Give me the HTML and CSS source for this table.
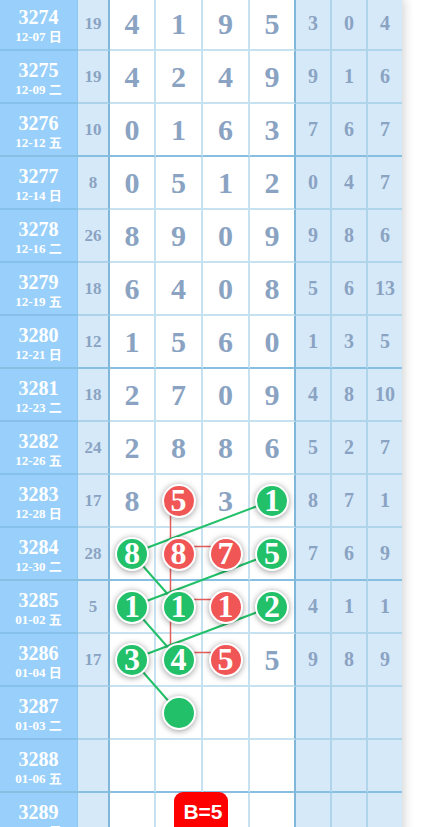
FILE: index.html
```html
<!DOCTYPE html>
<html lang="zh">
<head>
  <meta charset="UTF-8" />
  <meta name="viewport" content="width=device-width, initial-scale=1.0"/>
  <title>走势图</title>
  <link rel="stylesheet" href="styles.css">
</head>
<body>

  <div class="chart">

    <div class="row">
      <div class="no"><b>3274</b><span>12-07 日</span></div>
      <div class="sum">19</div>
      <div class="d">4</div><div class="d">1</div><div class="d">9</div><div class="d last">5</div>
      <div class="s">3</div><div class="s">0</div><div class="s">4</div>
    </div>
    <div class="row">
      <div class="no"><b>3275</b><span>12-09 二</span></div>
      <div class="sum">19</div>
      <div class="d">4</div><div class="d">2</div><div class="d">4</div><div class="d last">9</div>
      <div class="s">9</div><div class="s">1</div><div class="s">6</div>
    </div>
    <div class="row end">
      <div class="no"><b>3276</b><span>12-12 五</span></div>
      <div class="sum">10</div>
      <div class="d">0</div><div class="d">1</div><div class="d">6</div><div class="d last">3</div>
      <div class="s">7</div><div class="s">6</div><div class="s">7</div>
    </div>

    <div class="row">
      <div class="no"><b>3277</b><span>12-14 日</span></div>
      <div class="sum">8</div>
      <div class="d">0</div><div class="d">5</div><div class="d">1</div><div class="d last">2</div>
      <div class="s">0</div><div class="s">4</div><div class="s">7</div>
    </div>
    <div class="row">
      <div class="no"><b>3278</b><span>12-16 二</span></div>
      <div class="sum">26</div>
      <div class="d">8</div><div class="d">9</div><div class="d">0</div><div class="d last">9</div>
      <div class="s">9</div><div class="s">8</div><div class="s">6</div>
    </div>
    <div class="row">
      <div class="no"><b>3279</b><span>12-19 五</span></div>
      <div class="sum">18</div>
      <div class="d">6</div><div class="d">4</div><div class="d">0</div><div class="d last">8</div>
      <div class="s">5</div><div class="s">6</div><div class="s">13</div>
    </div>
    <div class="row end">
      <div class="no"><b>3280</b><span>12-21 日</span></div>
      <div class="sum">12</div>
      <div class="d">1</div><div class="d">5</div><div class="d">6</div><div class="d last">0</div>
      <div class="s">1</div><div class="s">3</div><div class="s">5</div>
    </div>

    <div class="row">
      <div class="no"><b>3281</b><span>12-23 二</span></div>
      <div class="sum">18</div>
      <div class="d">2</div><div class="d">7</div><div class="d">0</div><div class="d last">9</div>
      <div class="s">4</div><div class="s">8</div><div class="s">10</div>
    </div>
    <div class="row">
      <div class="no"><b>3282</b><span>12-26 五</span></div>
      <div class="sum">24</div>
      <div class="d">2</div><div class="d">8</div><div class="d">8</div><div class="d last">6</div>
      <div class="s">5</div><div class="s">2</div><div class="s">7</div>
    </div>
    <div class="row">
      <div class="no"><b>3283</b><span>12-28 日</span></div>
      <div class="sum">17</div>
      <div class="d">8</div>
      <div class="d"><i class="ball red">5</i></div>
      <div class="d">3</div>
      <div class="d last"><i class="ball green">1</i></div>
      <div class="s">8</div><div class="s">7</div><div class="s">1</div>
    </div>
    <div class="row end">
      <div class="no"><b>3284</b><span>12-30 二</span></div>
      <div class="sum">28</div>
      <div class="d"><i class="ball green">8</i></div>
      <div class="d"><i class="ball red">8</i></div>
      <div class="d"><i class="ball red">7</i></div>
      <div class="d last"><i class="ball green">5</i></div>
      <div class="s">7</div><div class="s">6</div><div class="s">9</div>
    </div>

    <div class="row">
      <div class="no"><b>3285</b><span>01-02 五</span></div>
      <div class="sum">5</div>
      <div class="d"><i class="ball green">1</i></div>
      <div class="d"><i class="ball green">1</i></div>
      <div class="d"><i class="ball red">1</i></div>
      <div class="d last"><i class="ball green">2</i></div>
      <div class="s">4</div><div class="s">1</div><div class="s">1</div>
    </div>
    <div class="row">
      <div class="no"><b>3286</b><span>01-04 日</span></div>
      <div class="sum">17</div>
      <div class="d"><i class="ball green">3</i></div>
      <div class="d"><i class="ball green">4</i></div>
      <div class="d"><i class="ball red">5</i></div>
      <div class="d last">5</div>
      <div class="s">9</div><div class="s">8</div><div class="s">9</div>
    </div>
    <div class="row">
      <div class="no"><b>3287</b><span>01-03 二</span></div>
      <div class="sum"></div>
      <div class="d"></div>
      <div class="d"><i class="ball green"></i></div>
      <div class="d"></div>
      <div class="d last"></div>
      <div class="s"></div><div class="s"></div><div class="s"></div>
    </div>
    <div class="row end">
      <div class="no"><b>3288</b><span>01-06 五</span></div>
      <div class="sum"></div>
      <div class="d"></div><div class="d"></div><div class="d"></div><div class="d last"></div>
      <div class="s"></div><div class="s"></div><div class="s"></div>
    </div>

    <div class="row">
      <div class="no"><b>3289</b><span>01-08 日</span></div>
      <div class="sum"></div>
      <div class="d"></div><div class="d"></div><div class="d"></div><div class="d last"></div>
      <div class="s"></div><div class="s"></div><div class="s"></div>
    </div>

    <!-- connecting lines, drawn under the balls -->
    <svg class="links" width="402" height="848" viewBox="0 0 402 848">
      <g stroke="#e65c5c" stroke-width="1.5" fill="none">
        <path d="M170.5 495.5 V654.5" />
        <path d="M170.5 548.5 H217.5" />
        <path d="M170.5 601.5 H217.5" />
        <path d="M170.5 654.5 H217.5" />
      </g>
      <g stroke="#22c068" stroke-width="2" fill="none">
        <path d="M132 555.5 L272 502.5" />
        <path d="M132 555.5 L178.5 608.5" />
        <path d="M132 608.5 L272 555.5" />
        <path d="M132 608.5 L178.5 661.5" />
        <path d="M132 661.5 L272 608.5" />
        <path d="M132 661.5 L178.5 714.5" />
      </g>
    </svg>

    <div class="tag">B=5</div>
  </div>

</body>
</html>
```

FILE: styles.css
```css
body {
  margin: 0;
  background: #ffffff;
  font-family: 'Liberation Serif', 'Noto Sans CJK SC', serif;
  overflow: hidden;
}

.chart {
  position: relative;
  width: 402px;
  margin-top: -2px;
  box-shadow: 2px 0 10px rgba(0,0,0,0.18);
}

.row {
  display: grid;
  grid-template-columns: 78px 32px 46px 47px 47px 46px 36px 36px 34px;
  height: 53px;
}

.row > div {
  box-sizing: border-box;
  border-bottom: 2px solid #c6e1ef;
  display: flex;
  align-items: center;
  justify-content: center;
  font-weight: bold;
  color: #8aa3c2;
}

/* draw number + date */
.no {
  flex-direction: column;
  background: #99d0fb;
  color: #ffffff !important;
  border-right: 1px solid #8cc6ee;
  border-bottom-color: #86c1e9 !important;
  padding-top: 4px;
}

.no b {
  font-size: 20px;
  line-height: 22px;
}

.no span {
  font-size: 13px;
  line-height: 18px;
}

.sum {
  background: #d6e9f9;
  border-right: 2px solid #7fb6da;
  border-bottom-color: #acd2ea !important;
  font-size: 17px;
}

.d {
  background: #ffffff;
  border-right: 2px solid #c6e1ef;
  font-size: 30px;
}

.d.last {
  border-right: 2px solid #7fb6da;
}

.s {
  background: #d6e9f9;
  border-right: 2px solid #b0d5eb;
  border-bottom-color: #b0d5eb !important;
  font-size: 20px;
}

.s:last-child {
  border-right: none;
}

.row.end > div {
  border-bottom: 2px solid #86bfe1 !important;
}

.ball {
  position: relative;
  z-index: 2;
  width: 34px;
  height: 34px;
  box-sizing: border-box;
  border: 2px solid #ffffff;
  border-radius: 50%;
  display: flex;
  align-items: center;
  justify-content: center;
  font-style: normal;
  font-size: 32px;
  color: #ffffff;
  box-shadow: 0 1px 6px rgba(0,0,0,0.4);
}

.red {
  background: #f05656;
}

.green {
  background: #22c068;
}

.links {
  position: absolute;
  left: 0;
  top: 0;
  z-index: 1;
  pointer-events: none;
}

.tag {
  position: absolute;
  left: 174px;
  top: 794px;
  z-index: 3;
  width: 54px;
  height: 44px;
  box-sizing: border-box;
  padding: 8px 0 0 4px;
  background: #ff0000;
  border-radius: 9px;
  color: #ffffff;
  font-family: 'Liberation Sans', Arial, sans-serif;
  font-weight: bold;
  font-size: 21px;
  line-height: 24px;
  text-align: center;
}
```
